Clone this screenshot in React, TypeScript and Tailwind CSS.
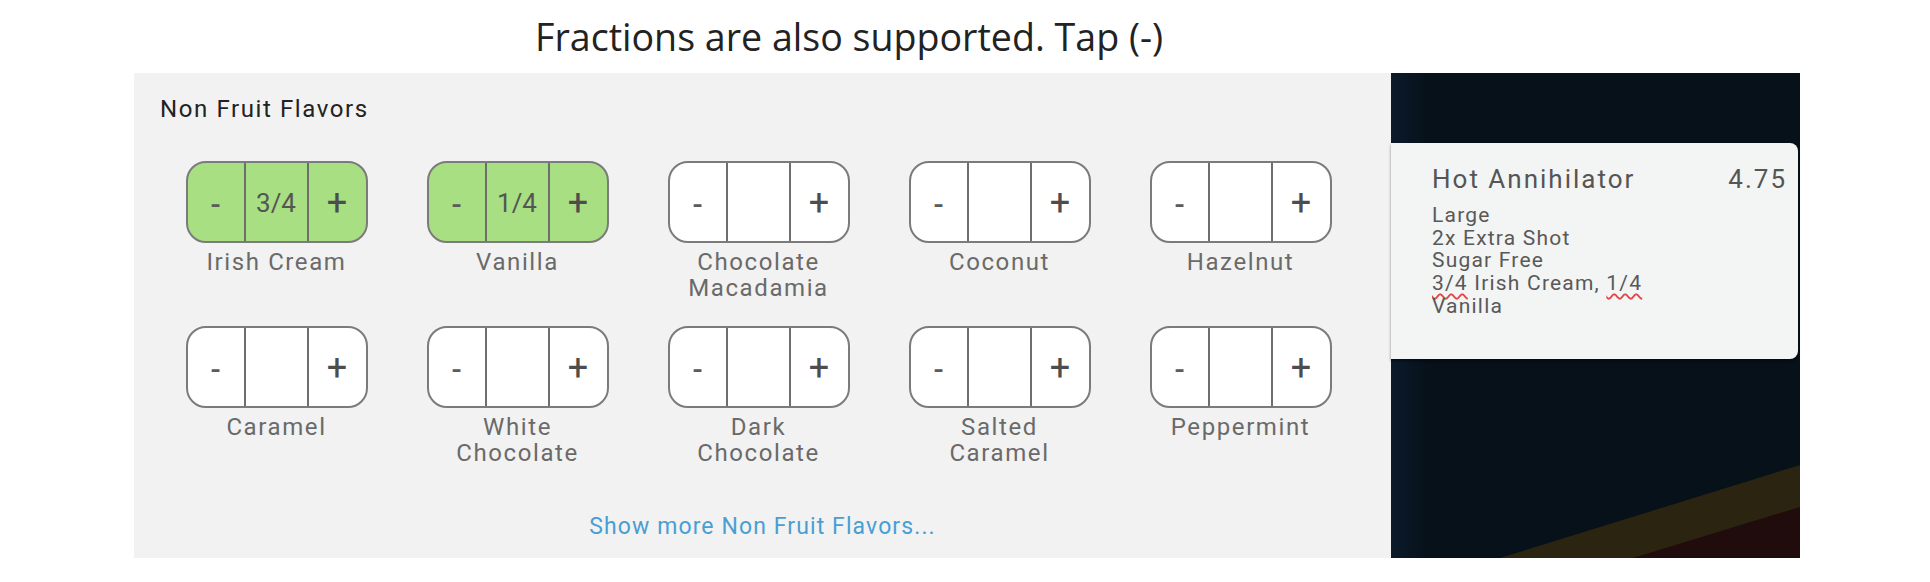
const flavors = [
  { lines: ['Irish Cream'], value: '3/4' },
  { lines: ['Vanilla'], value: '1/4' },
  { lines: ['Chocolate', 'Macadamia'] },
  { lines: ['Coconut'] },
  { lines: ['Hazelnut'] },
  { lines: ['Caramel'] },
  { lines: ['White', 'Chocolate'] },
  { lines: ['Dark', 'Chocolate'] },
  { lines: ['Salted', 'Caramel'] },
  { lines: ['Peppermint'] },
]

const sans = "font-['Roboto',_'Liberation_Sans',_sans-serif]"

function Stepper({ value }: { value?: string }) {
  const active = !!value
  return (
    <div
      className={`flex h-[82px] w-[182px] overflow-hidden rounded-[20px] border-2 border-[#7b7b7b] ${
        active ? 'bg-[#a7df82]' : 'bg-white'
      }`}
    >
      <div className="flex w-[56px] items-center justify-center pt-[4px] text-[30px] font-medium text-[#5c5c5c]">-</div>
      <div className="flex w-[65px] items-center justify-center border-x-2 border-[#6e6e6e] pt-[2px] text-[26px] text-[#555]">
        {value}
      </div>
      <div className="flex flex-1 items-center justify-center pt-[2px] text-[36px] text-[#4d4d4d]">+</div>
    </div>
  )
}

export default function App() {
  return (
    <div className="h-[582px] w-[1930px] overflow-hidden bg-white">
      {/* caption */}
      <div className="flex h-[73px] items-center pl-[535px]">
        <span className="font-['Open_Sans',_sans-serif] text-[37.6px] leading-[44px] text-[#222]">
          Fractions are also supported. Tap (-)
        </span>
      </div>

      <div className="ml-[134px] flex h-[485px]">
        {/* flavors panel */}
        <div className={`w-[1257px] bg-[#f2f2f2] ${sans}`}>
          <div className="pl-[26px] pt-[22px] text-[24px] leading-[28px] tracking-[1.6px] text-[#222]">Non Fruit Flavors</div>
          <div className="mt-[38px] grid grid-cols-[repeat(5,241px)] px-[22px]">
            {flavors.map((f) => (
              <div key={f.lines.join(' ')} className="flex h-[165px] flex-col items-center">
                <Stepper value={f.value} />
                <div className="mt-[6px] text-center text-[24px] leading-[26px] tracking-[1.6px] text-[#6a6a6a]">
                  {f.lines.map((l) => (
                    <div key={l}>{l}</div>
                  ))}
                </div>
              </div>
            ))}
          </div>
          <div className="mt-[22px] text-center text-[23px] leading-[28px] tracking-[1.1px] text-[#4a9ed2]">
            Show more Non Fruit Flavors...
          </div>
        </div>

        {/* order panel */}
        <div className="relative w-[409px] bg-[linear-gradient(90deg,#0b1b2a_0px,#07111a_36px)]">
          <svg className="absolute inset-0" width="409" height="485" viewBox="0 0 409 485">
            <polygon points="109,485 409,392 409,485" fill="#2a2410" />
            <polygon points="242,485 409,434 409,485" fill="#200c0c" />
          </svg>
          <div
            className={`relative mt-[70px] h-[216px] w-[407px] rounded-r-[8px] bg-[#f3f4f4] pl-[41px] pr-[11px] pt-[21px] shadow-[0_2px_3px_rgba(0,0,0,0.45)] ${sans}`}
          >
            <div className="flex items-start justify-between text-[26px] leading-[30px] tracking-[2px] text-[#555]">
              <span>Hot Annihilator</span>
              <span>4.75</span>
            </div>
            <div className="mt-[10px] text-[21px] leading-[22.7px] tracking-[1.2px] text-[#595959]">
              <div>Large</div>
              <div>2x Extra Shot</div>
              <div>Sugar Free</div>
              <div>
                <span className="underline decoration-[#e2474c] decoration-wavy decoration-2 underline-offset-[3px]">3/4</span> Irish Cream,{' '}
                <span className="underline decoration-[#e2474c] decoration-wavy decoration-2 underline-offset-[3px]">1/4</span>
              </div>
              <div>Vanilla</div>
            </div>
          </div>
        </div>
      </div>
    </div>
  )
}
